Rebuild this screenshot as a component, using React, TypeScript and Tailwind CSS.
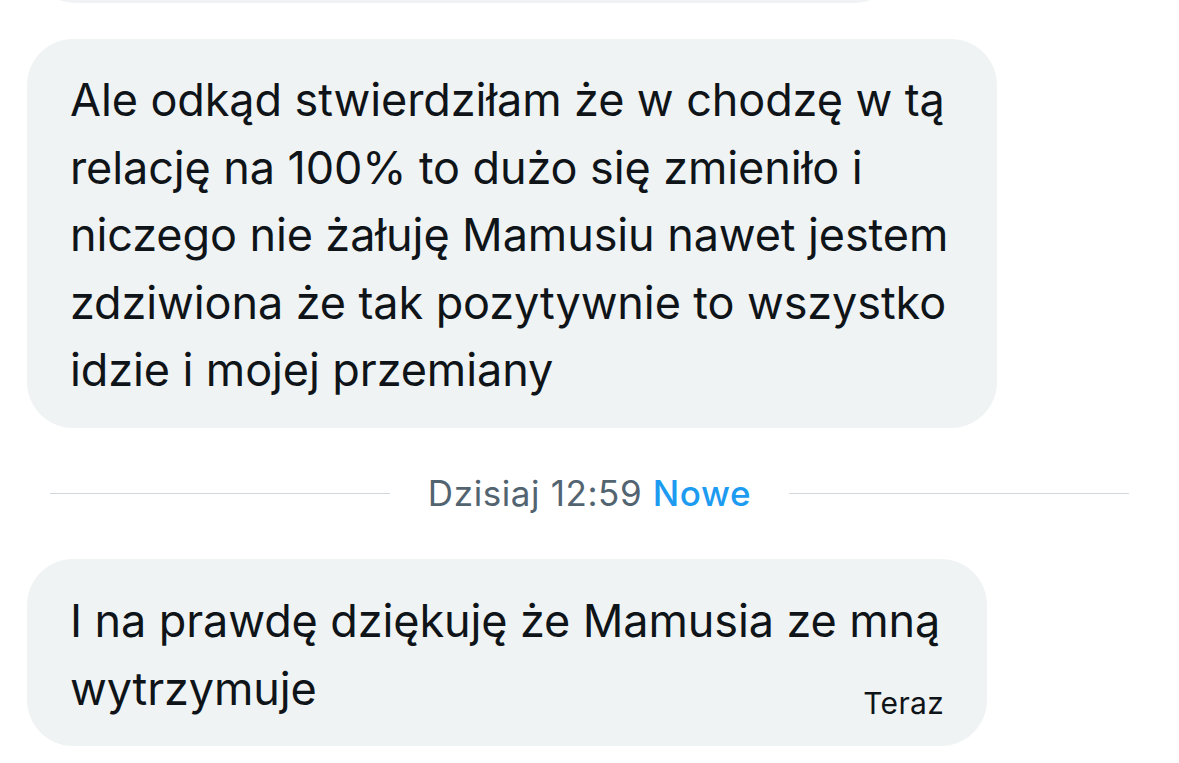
import React from "react";

const first = [
  "Ale odkąd stwierdziłam że w chodzę w tą",
  "relację na 100% to dużo się zmieniło i",
  "niczego nie żałuję Mamusiu nawet jestem",
  "zdziwiona że tak pozytywnie to wszystko",
  "idzie i mojej przemiany",
];

export default function App() {
  return (
    <div className="w-[1179px] h-[763px] overflow-hidden bg-white font-['Inter','Liberation_Sans',sans-serif] text-[#0f1419]">
      {/* previous bubble, mostly scrolled away */}
      <div className="-mt-[100px] ml-[30px] h-[103px] w-[870px] rounded-[45px] bg-[#eff3f4]" />

      <div className="mt-[36px] ml-[27px] w-[970px] rounded-[46px] bg-[#eff3f4] px-[43px] pt-[27px] pb-[24px] text-[45px] leading-[67.5px] tracking-[-0.1px]">
        {first.map((l) => (
          <div key={l} className="whitespace-nowrap">
            {l}
          </div>
        ))}
      </div>

      <div className="mt-[46px] mx-[50px] flex h-[40px] items-center gap-[38px]">
        <div className="h-px flex-1 bg-[#cfd9de]" />
        <div className="whitespace-nowrap text-[35px] tracking-[0.6px] text-[#536471]">
          Dzisiaj 12:59 <span className="font-medium text-[#1d9bf0]">Nowe</span>
        </div>
        <div className="h-px flex-1 bg-[#cfd9de]" />
      </div>

      <div className="mt-[45px] ml-[27px] w-[960px] rounded-[46px] bg-[#eff3f4] px-[43px] pt-[28px] pb-[23px] text-[45px] leading-[68px] tracking-[-0.1px]">
        <div className="whitespace-nowrap">I na prawdę dziękuję że Mamusia ze mną</div>
        <div className="flex items-end justify-between">
          <span>wytrzymuje</span>
          <span className="text-[30px] leading-[40px] tracking-[0.3px]">Teraz</span>
        </div>
      </div>
    </div>
  );
}
